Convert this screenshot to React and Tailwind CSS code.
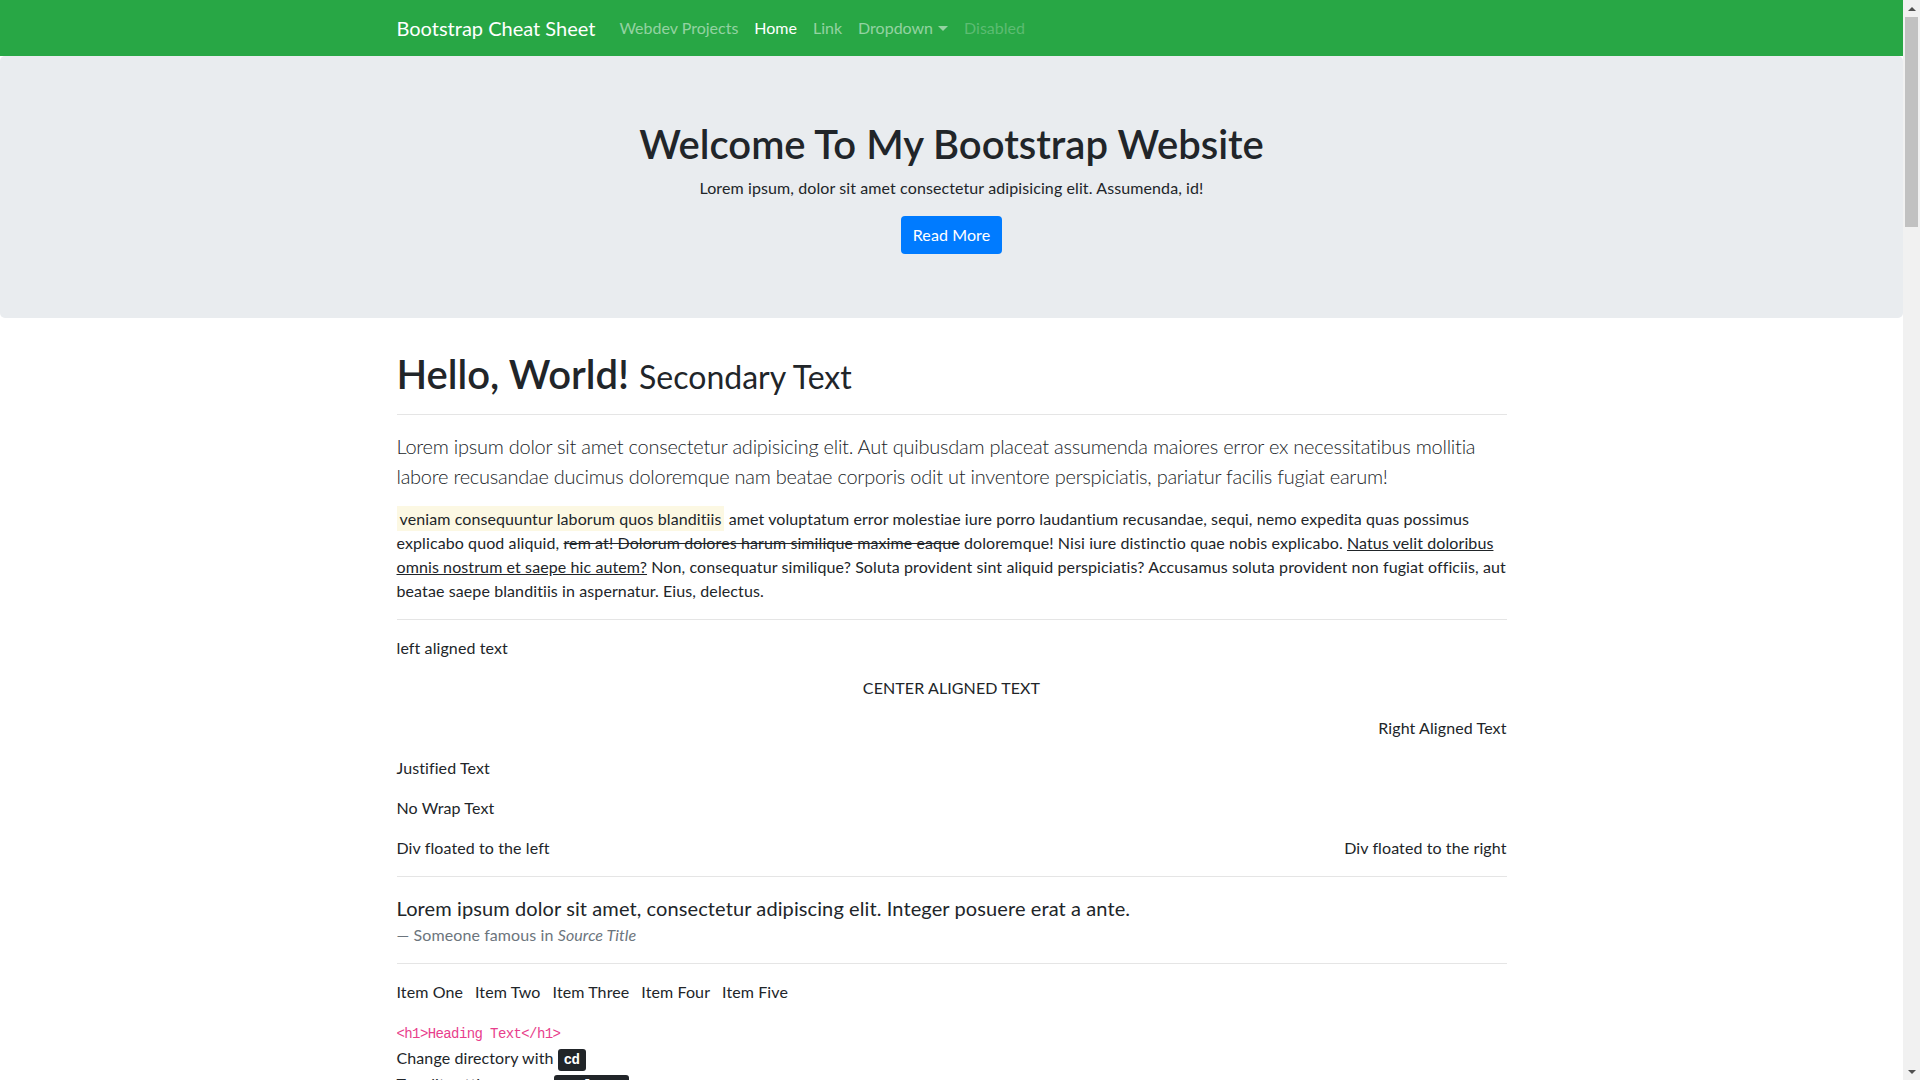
import React from "react";

const body = { fontFamily: 'Lato, "Open Sans", "Liberation Sans", sans-serif' };
const mono = { fontFamily: '"Liberation Mono", "DejaVu Sans Mono", monospace' };

function Hr() {
  return <hr className="my-4 border-0 border-t border-t-[rgba(0,0,0,0.1)]" />;
}

export default function App() {
  return (
    <div className="flex h-[1080px] w-[1920px] overflow-hidden bg-white text-[16px] leading-[24px] tracking-[0.1px] text-[#212529]" style={body}>
      <div className="flex-1 overflow-hidden">
        <nav className="h-[56px] bg-[#28a745] tracking-[0px]">
          <div className="mx-auto flex h-full w-[1140px] items-center px-[15px]">
            <span className="mr-4 py-[5px] text-[20px] leading-[30px] text-white">Bootstrap Cheat Sheet</span>
            <span className="px-2 text-[rgba(255,255,255,0.5)]">Webdev Projects</span>
            <span className="px-2 text-white">Home</span>
            <span className="px-2 text-[rgba(255,255,255,0.5)]">Link</span>
            <span className="flex items-center px-2 text-[rgba(255,255,255,0.5)]">
              Dropdown
              <span className="ml-[5px] mt-[1px] inline-block h-0 w-0 border-x-[5px] border-t-[5px] border-x-transparent border-t-[rgba(255,255,255,0.5)]" />
            </span>
            <span className="px-2 text-[rgba(255,255,255,0.25)]">Disabled</span>
          </div>
        </nav>

        <div className="mb-8 rounded-[5px] bg-[#e9ecef] px-8 py-16 text-center">
          <h1 className="mb-2 h-[48px] text-[40px] font-semibold leading-[48px] tracking-[0px]">Welcome To My Bootstrap Website</h1>
          <p className="mb-4">Lorem ipsum, dolor sit amet consectetur adipisicing elit. Assumenda, id!</p>
          <span className="inline-block rounded-[4px] bg-[#007bff] px-3 py-[7px] leading-[24px] text-white">Read More</span>
        </div>

        <div className="mx-auto w-[1140px] px-[15px]">
          <h1 className="h-[48px] text-[40px] font-semibold leading-[48px] tracking-[0px]">
            Hello, World! <small className="text-[32px] font-normal leading-none">Secondary Text</small>
          </h1>
          <Hr />
          <p className="mb-4 text-[20px] font-light leading-[30px] tracking-[-0.25px]">
            Lorem ipsum dolor sit amet consectetur adipisicing elit. Aut quibusdam placeat assumenda maiores error ex necessitatibus mollitia labore recusandae ducimus doloremque nam beatae corporis odit ut inventore perspiciatis, pariatur facilis fugiat earum!
          </p>
          <p>
            <mark className="bg-[#fcf8e3] p-[3px] text-[#212529]"> veniam consequuntur laborum quos blanditiis</mark> amet voluptatum error molestiae iure porro laudantium recusandae, sequi, nemo expedita quas possimus explicabo quod aliquid, <del>rem at! Dolorum dolores harum similique maxime eaque</del> doloremque! Nisi iure distinctio quae nobis explicabo. <u>Natus velit doloribus omnis nostrum et saepe hic autem?</u> Non, consequatur similique? Soluta provident sint aliquid perspiciatis? Accusamus soluta provident non fugiat officiis, aut beatae saepe blanditiis in aspernatur. Eius, delectus.
          </p>
          <Hr />
          <p className="mb-4">left aligned text</p>
          <p className="mb-4 text-center uppercase">Center aligned text</p>
          <p className="mb-4 text-right">Right Aligned Text</p>
          <p className="mb-4 text-justify">Justified Text</p>
          <p className="mb-4 whitespace-nowrap">No Wrap Text</p>
          <div className="flex justify-between">
            <div>Div floated to the left</div>
            <div>Div floated to the right</div>
          </div>
          <Hr />
          <blockquote className="text-[20px] leading-[30px]">
            <p>Lorem ipsum dolor sit amet, consectetur adipiscing elit. Integer posuere erat a ante.</p>
            <footer className="text-[16px] leading-[24px] text-[#6c757d]">
              — Someone famous in <cite className="italic">Source Title</cite>
            </footer>
          </blockquote>
          <Hr />
          <ul className="mb-4 flex gap-3">
            <li>Item One</li>
            <li>Item Two</li>
            <li>Item Three</li>
            <li>Item Four</li>
            <li>Item Five</li>
          </ul>
          <div>
            <code className="text-[14px] tracking-[-0.6px] text-[#e83e8c]" style={mono}>&lt;h1&gt;Heading Text&lt;/h1&gt;</code>
          </div>
          <div>
            Change directory with <kbd className="rounded-[3px] bg-[#212529] px-[6px] py-[3px] text-[14px] font-bold tracking-[-0.5px] text-white" style={mono}>cd</kbd>
          </div>
          <div>
            To edit settings, press <kbd className="rounded-[3px] bg-[#212529] px-[6px] py-[3px] text-[14px] font-bold tracking-[-0.5px] text-white" style={mono}>ctrl + ,</kbd>
          </div>
        </div>
      </div>

      <div className="relative w-[17px] shrink-0 bg-[#f1f1f1]">
        <div className="flex h-[17px] items-center justify-center">
          <span className="h-0 w-0 border-x-[4px] border-b-[4px] border-x-transparent border-b-[#505050]" />
        </div>
        <div className="mx-[2px] h-[210px] bg-[#c1c1c1]" />
        <div className="absolute bottom-0 left-0 flex h-[17px] w-[17px] items-center justify-center">
          <span className="h-0 w-0 border-x-[4px] border-t-[4px] border-x-transparent border-t-[#505050]" />
        </div>
      </div>
    </div>
  );
}
